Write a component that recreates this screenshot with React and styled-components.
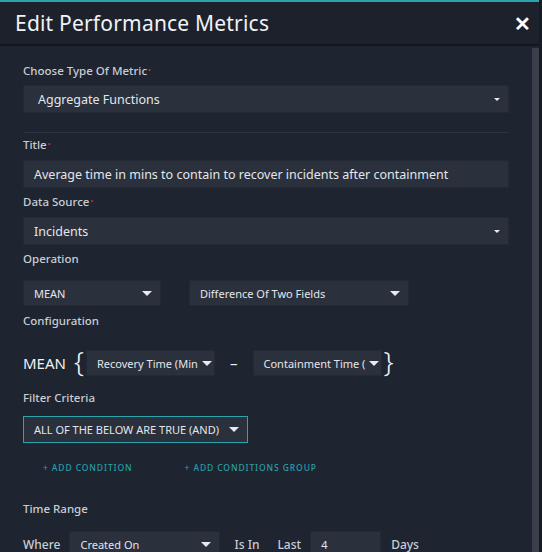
import React from "react";
import styled, { createGlobalStyle } from "styled-components";

const G = createGlobalStyle`
  html,body{margin:0;padding:0;background:#161a22;}
  body{font-family:"Noto Sans",Roboto,sans-serif;color:#d6dae1;}
`;
const Modal = styled.div`
  width:539px;height:552px;box-sizing:border-box;background:#1e2430;
  border-top:2px solid #2aa4ad;display:flex;flex-direction:column;overflow:hidden;
`;
const Header = styled.div`
  height:42px;flex:none;display:flex;align-items:center;justify-content:space-between;
  padding:0 8px 0 15px;border-bottom:2px solid #12161d;background:#1c212c;
`;
const H = styled.h1`margin:0;font-weight:400;font-size:21px;color:#f0f2f5;letter-spacing:0.2px;`;
const Close = styled.span`font-size:20px;font-weight:700;color:#fff;`;
const Body = styled.div`flex:1;display:flex;`;
const Content = styled.div`flex:1;padding:18px 23px 0 23px;display:flex;flex-direction:column;`;
const Scroll = styled.div`width:7px;background:#3a404b;margin-top:2px;`;
const Label = styled.div`
  font-size:11.5px;line-height:14px;font-weight:500;color:#c9cdd4;margin:${p=>p.m||"0 0 7px"};
  &::after{content:${p=>p.req?"'•'":"''"};color:#d33;font-size:7px;vertical-align:top;margin-left:1px;}
`;
const Field = styled.div`
  height:${p=>p.h||28}px;width:${p=>p.w?p.w+"px":"auto"};box-sizing:border-box;background:#2a303c;
  border:1px solid ${p=>p.outline?"#2aa4ad":"#232935"};display:flex;align-items:center;justify-content:space-between;
  padding:0 ${p=>p.pr||8}px 0 ${p=>p.pl||10}px;font-size:${p=>p.fs||12.5}px;color:#e3e6eb;flex:none;
  white-space:nowrap;overflow:hidden;
`;
const Caret = styled.span`
  width:0;height:0;border-left:${p=>p.s||5}px solid transparent;border-right:${p=>p.s||5}px solid transparent;
  border-top:${p=>p.s||5}px solid #e8eaee;margin-left:4px;flex:none;
`;
const Divider = styled.div`height:1px;background:#2c323e;margin:19px 0 5px;`;
const Row = styled.div`display:flex;align-items:center;gap:${p=>p.gap||0}px;margin:${p=>p.m||0};`;
const Big = styled.span`font-size:15px;color:#eef0f3;`;
const Brace = styled.span`font-size:28px;font-weight:300;color:#eef0f3;line-height:1;margin:${p=>p.m};`;
const Add = styled.span`font-size:8.5px;line-height:10px;letter-spacing:0.9px;color:#2a9fa8;text-transform:uppercase;font-weight:500;`;
const Txt = styled.span`font-size:12px;color:#c9cdd4;font-weight:500;margin:${p=>p.m||0};`;

export default function App(){
  return <><G/><Modal>
    <Header><H>Edit Performance Metrics</H><Close>✕</Close></Header>
    <Body><Content>
      <Label req>Choose Type Of Metric</Label>
      <Field pl={14}>Aggregate Functions<Caret s={3.5}/></Field>
      <Divider/>
      <Label req m="0 0 8px">Title</Label>
      <Field>Average time in mins to contain to recover incidents after containment</Field>
      <Label req m="7px 0 8px">Data Source</Label>
      <Field>Incidents<Caret s={3.5}/></Field>
      <Label m="7px 0 14px">Operation</Label>
      <Row gap={28}>
        <Field h={26} w={138} fs={11}>MEAN<Caret/></Field>
        <Field h={26} w={220} fs={11}>Difference Of Two Fields<Caret/></Field>
      </Row>
      <Label m="8px 0 22px">Configuration</Label>
      <Row>
        <Big>MEAN</Big><Brace m="-4px 2px 0 8px">{"{"}</Brace>
        <Field h={26} w={129} fs={11}>Recovery Time (Min<Caret/></Field>
        <Big style={{margin:"0 15px"}}>–</Big>
        <Field h={26} w={129} fs={11}>Containment Time (<Caret/></Field>
        <Brace m="-4px 0 0 2px">{"}"}</Brace>
      </Row>
      <Label m="15px 0 11px">Filter Criteria</Label>
      <Field h={27} w={225} fs={11} outline>ALL OF THE BELOW ARE TRUE (AND)<Caret/></Field>
      <Row gap={52} m="20px 0 0 20px"><Add>+ Add Condition</Add><Add>+ Add Conditions Group</Add></Row>
      <Label m="29px 0 15px">Time Range</Label>
      <Row>
        <Txt>Where</Txt>
        <Field h={26} w={151} fs={11} style={{marginLeft:9}}>Created On<Caret/></Field>
        <Txt m="0 0 0 14px">Is In</Txt>
        <Txt m="0 0 0 18px">Last</Txt>
        <Field h={26} w={71} fs={11} style={{marginLeft:9}}>4</Field>
        <Txt m="0 0 0 10px">Days</Txt>
      </Row>
    </Content><Scroll/></Body>
  </Modal></>;
}
